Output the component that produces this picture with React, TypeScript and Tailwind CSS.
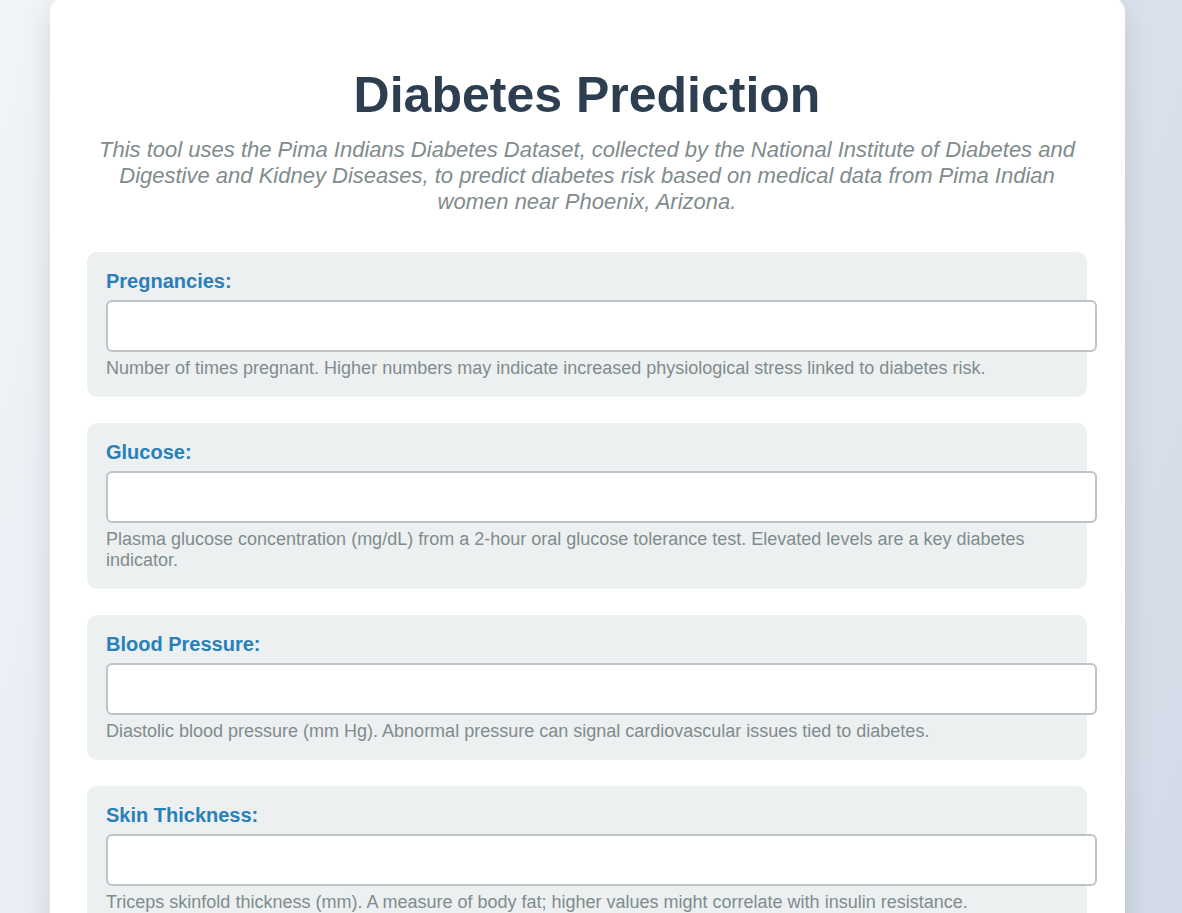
const fields = [
  {
    label: "Pregnancies:",
    help: "Number of times pregnant. Higher numbers may indicate increased physiological stress linked to diabetes risk.",
  },
  {
    label: "Glucose:",
    help: "Plasma glucose concentration (mg/dL) from a 2-hour oral glucose tolerance test. Elevated levels are a key diabetes indicator.",
  },
  {
    label: "Blood Pressure:",
    help: "Diastolic blood pressure (mm Hg). Abnormal pressure can signal cardiovascular issues tied to diabetes.",
  },
  {
    label: "Skin Thickness:",
    help: "Triceps skinfold thickness (mm). A measure of body fat; higher values might correlate with insulin resistance.",
  },
  {
    label: "Insulin:",
    help: "2-hour serum insulin (mu U/ml). Abnormal insulin levels can point to impaired glucose metabolism.",
  },
  {
    label: "BMI:",
    help: "Body mass index (weight in kg / (height in m)^2). Obesity is a major risk factor for type 2 diabetes.",
  },
];

const App = () => {
  return (
    <div className="h-[913px] overflow-hidden bg-[linear-gradient(110deg,#f1f4f8_0%,#d3dbe8_100%)] font-['Liberation_Sans',Arial,sans-serif]">
      <div className="ml-[50px] mt-[-3px] w-[1075px] bg-white rounded-[15px] shadow-[0_10px_30px_rgba(0,0,0,0.12)] pt-[70px] pl-[37px] pr-[38px] pb-10">
        {/* Header */}
        <h1 className="text-center text-[50px] leading-[57px] font-bold text-[#2c3e50]">
          Diabetes Prediction
        </h1>
        <p className="mt-[13px] px-1 text-center italic text-[22px] leading-[26px] text-[#7f8c8d]">
          This tool uses the Pima Indians Diabetes Dataset, collected by the National Institute of Diabetes and Digestive and Kidney Diseases, to predict diabetes risk based on medical data from Pima Indian women near Phoenix, Arizona.
        </p>

        <form className="mt-[37px] flex flex-col gap-[26px]">
          {fields.map((item, index) => (
            <div
              key={index}
              className="bg-[#ecf0f1] rounded-[10px] pt-[18px] pb-[18px] px-[19px]"
            >
              <label className="block text-[20px] leading-[23px] font-bold text-[#2980b9]">
                {item.label}
              </label>
              <input
                type="number"
                className="block mt-[7px] w-[991px] h-[52px] bg-white border-2 border-[#bdc3c7] rounded-[6px] px-3 outline-none"
              />
              <p className="mt-[6px] text-[18px] leading-[21px] text-[#7f8c8d]">
                {item.help}
              </p>
            </div>
          ))}
        </form>
      </div>
    </div>
  );
};

export default App;
